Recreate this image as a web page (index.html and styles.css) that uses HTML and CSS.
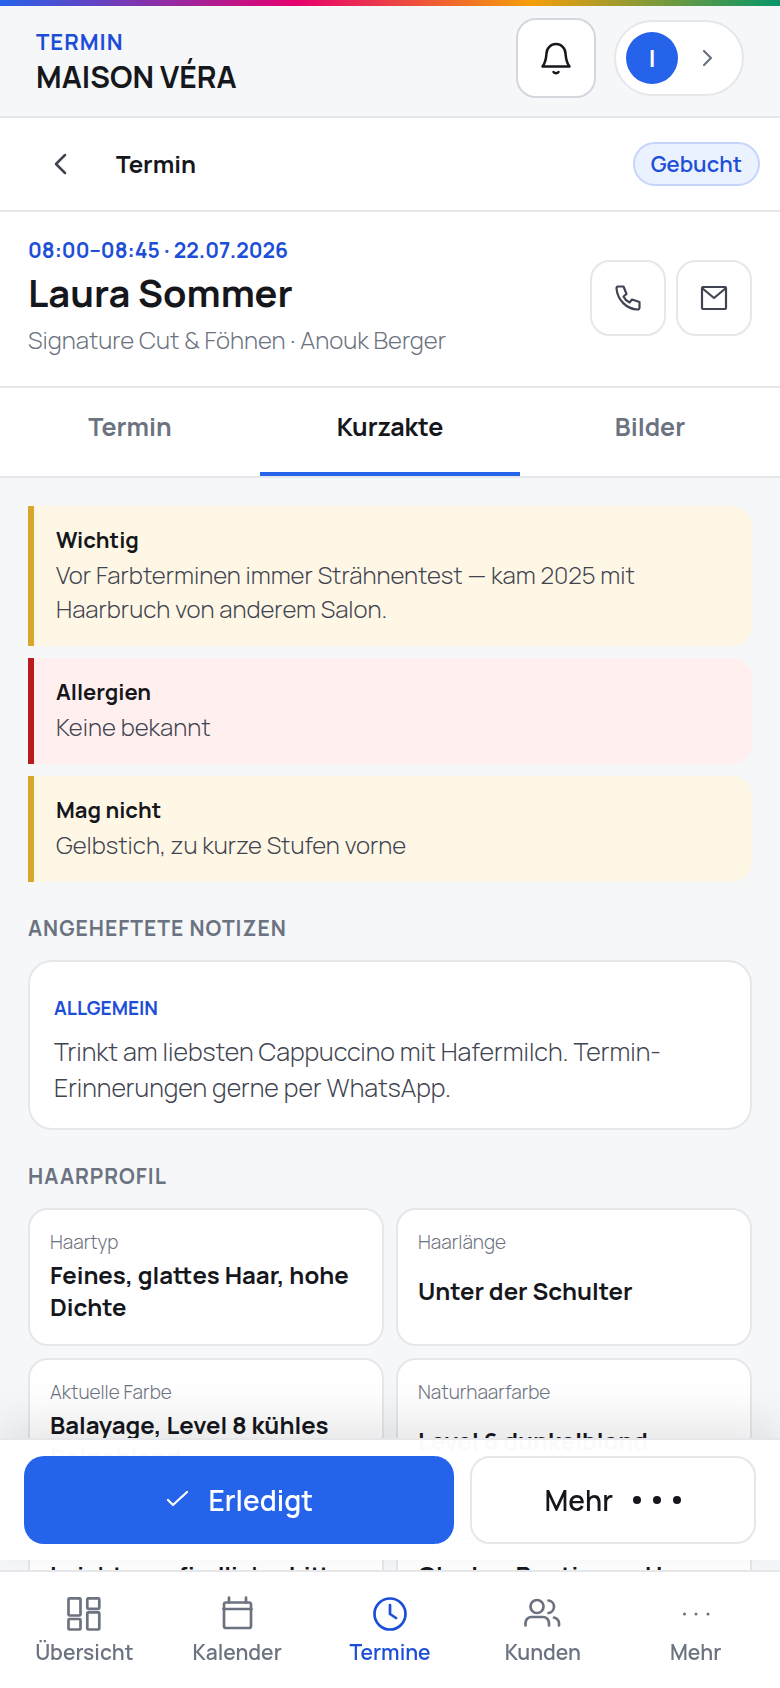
FILE: index.html
```
<!DOCTYPE html>
<html lang="de">

<head>
    <meta charset="UTF-8">
    <meta name="viewport" content="width=device-width, initial-scale=1.0">
    <title>MAISON VÉRA - Termin</title>
    <link rel="stylesheet" href="styles.css">
</head>

<body>
    <div class="app">
        <header class="topbar">
            <div class="brand">
                <span class="brand-label">TERMIN</span>
                <span class="brand-name">MAISON VÉRA</span>
            </div>
            <button type="button" class="bell-btn" aria-label="Benachrichtigungen">
                <svg width="36" height="36" viewBox="0 0 36 36" fill="none" stroke="currentColor" stroke-width="2.5" stroke-linecap="round" stroke-linejoin="round">
                    <path d="M4.500 26.500h27c-3.500-4.500-3.500-8-4-13a9.500 9.500 0 0 0-19 0c-.5 5-.5 8.500-4 13z" />
                    <path d="M15.500 32c1.200 1.600 3.800 1.600 5 0" />
                </svg>
            </button>
            <button type="button" class="profile-btn" aria-label="Profil">
                <span class="avatar">I</span>
                <svg width="12" height="18" viewBox="0 0 12 18" fill="none" stroke="currentColor" stroke-width="2.2" stroke-linecap="round" stroke-linejoin="round">
                    <path d="M2 2l7 7-7 7" />
                </svg>
            </button>
        </header>

        <div class="subbar">
            <button type="button" class="back-btn" aria-label="Zurück">
                <svg width="14" height="22" viewBox="0 0 14 22" fill="none" stroke="currentColor" stroke-width="2.5" stroke-linecap="round" stroke-linejoin="round">
                    <path d="M12 2l-9 9 9 9" />
                </svg>
            </button>
            <h1>Termin</h1>
            <span class="status">Gebucht</span>
        </div>

        <section class="client">
            <div class="client-info">
                <p class="client-time">08:00–08:45 · 22.07.2026</p>
                <h2>Laura Sommer</h2>
                <p class="client-service">Signature Cut &amp; Föhnen · Anouk Berger</p>
            </div>
            <div class="contact">
                <a href="#" aria-label="Anrufen">
                    <svg width="28" height="28" viewBox="0 0 28 28" fill="none" stroke="currentColor" stroke-width="2.2" stroke-linejoin="round">
                        <path d="M4 2.500h5.500l3 7.500-3 2.500c1.300 2.800 3.200 4.700 6 6l2.500-3 7.500 2.500V23.500c0 1-.8 2-2 2C12.500 25 3.500 16 2.500 4.500c0-1.200.7-2 1.500-2z" />
                    </svg>
                </a>
                <a href="#" aria-label="E-Mail">
                    <svg width="28" height="28" viewBox="0 0 28 28" fill="none" stroke="currentColor" stroke-width="2.2" stroke-linejoin="round">
                        <rect x="2" y="3" width="24" height="22" rx="1" />
                        <path d="M2 4l12 10L26 4" />
                    </svg>
                </a>
            </div>
        </section>

        <div class="tabs" role="tablist">
            <button type="button" role="tab">Termin</button>
            <button type="button" role="tab" class="active" aria-selected="true">Kurzakte</button>
            <button type="button" role="tab">Bilder</button>
        </div>

        <main>
            <div class="alerts">
                <div class="alert">
                    <strong>Wichtig</strong>
                    <p>Vor Farbterminen immer Strähnentest — kam 2025 mit Haarbruch von anderem Salon.</p>
                </div>
                <div class="alert danger">
                    <strong>Allergien</strong>
                    <p>Keine bekannt</p>
                </div>
                <div class="alert">
                    <strong>Mag nicht</strong>
                    <p>Gelbstich, zu kurze Stufen vorne</p>
                </div>
            </div>

            <h3>ANGEHEFTETE NOTIZEN</h3>
            <article class="note">
                <span class="note-tag">ALLGEMEIN</span>
                <p>Trinkt am liebsten Cappuccino mit Hafermilch. Termin-Erinnerungen gerne per WhatsApp.</p>
            </article>

            <h3>HAARPROFIL</h3>
            <dl class="profile">
                <div>
                    <dt>Haartyp</dt>
                    <dd>Feines, glattes Haar, hohe Dichte</dd>
                </div>
                <div>
                    <dt>Haarlänge</dt>
                    <dd>Unter der Schulter</dd>
                </div>
                <div>
                    <dt>Aktuelle Farbe</dt>
                    <dd>Balayage, Level 8 kühles Beigeblond</dd>
                </div>
                <div>
                    <dt>Naturhaarfarbe</dt>
                    <dd>Level 6 dunkelblond</dd>
                </div>
                <div>
                    <dt>Kopfhaut</dt>
                    <dd>Leicht empfindlich – bitte mild</dd>
                </div>
                <div>
                    <dt>Pflegelevel</dt>
                    <dd>Olaplex-Routine zu Hause empfohlen</dd>
                </div>
            </dl>
        </main>

        <footer class="dock">
            <div class="actions">
                <button type="button" class="done-btn">
                    <svg width="24" height="20" viewBox="0 0 24 20" fill="none" stroke="currentColor" stroke-width="2.2" stroke-linecap="round" stroke-linejoin="round">
                        <path d="M3 10l5 5L22 2" />
                    </svg>
                    Erledigt
                </button>
                <button type="button" class="more-btn">
                    Mehr
                    <svg width="48" height="10" viewBox="0 0 48 10" fill="currentColor">
                        <circle cx="4" cy="5" r="4" />
                        <circle cx="24" cy="5" r="4" />
                        <circle cx="44" cy="5" r="4" />
                    </svg>
                </button>
            </div>
            <nav>
                <a href="#">
                    <svg width="40" height="40" viewBox="0 0 40 40" fill="none" stroke="currentColor" stroke-width="2.7" stroke-linejoin="round">
                        <rect x="4.500" y="4.300" width="12" height="17.200" rx="1" />
                        <rect x="4.500" y="25" width="12" height="10.500" rx="1" />
                        <rect x="23.300" y="4.300" width="12" height="10.500" rx="1" />
                        <rect x="23.300" y="18.300" width="12" height="17.200" rx="1" />
                    </svg>
                    Übersicht
                </a>
                <a href="#">
                    <svg width="40" height="40" viewBox="0 0 40 40" fill="none" stroke="currentColor" stroke-width="2.7" stroke-linecap="round" stroke-linejoin="round">
                        <rect x="7" y="8.500" width="27" height="25.500" rx="2" />
                        <path d="M6.500 15h28M12 3.500v5M29 3.500v5" />
                    </svg>
                    Kalender
                </a>
                <a href="#" class="active">
                    <svg width="40" height="40" viewBox="0 0 40 40" fill="none" stroke="currentColor" stroke-width="2.7" stroke-linecap="round" stroke-linejoin="round">
                        <circle cx="20" cy="20" r="15.500" />
                        <path d="M20 11v9l6 4" />
                    </svg>
                    Termine
                </a>
                <a href="#">
                    <svg width="40" height="40" viewBox="0 0 40 40" fill="none" stroke="currentColor" stroke-width="2.7" stroke-linecap="round" stroke-linejoin="round">
                        <circle cx="14" cy="12.500" r="6.500" />
                        <path d="M2.500 31.500v-2.500a6 6 0 0 1 6-6h11.500a6 6 0 0 1 6 6v2.500M25.500 6.500a6.300 6.300 0 0 1 0 12.500M31 23.500a6.500 6.500 0 0 1 5 6v2" />
                    </svg>
                    Kunden
                </a>
                <a href="#">
                    <svg width="40" height="40" viewBox="0 0 40 40" fill="currentColor">
                        <circle cx="8.500" cy="20" r="1.500" />
                        <circle cx="20" cy="20" r="1.500" />
                        <circle cx="32" cy="20" r="1.500" />
                    </svg>
                    Mehr
                </a>
            </nav>
        </footer>
    </div>
</body>

</html>
```
FILE: styles.css
```
* {
    box-sizing: border-box;
}

body {
    font-family: Manrope, Inter, sans-serif;
    margin: 0;
    background-color: #f5f7f9;
    color: #15171c;
}

h1,
h2,
h3,
p,
dl,
dd {
    margin: 0;
}

button {
    font-family: inherit;
    color: inherit;
    cursor: pointer;
}

a {
    text-decoration: none;
}

.app {
    display: flex;
    flex-direction: column;
    height: 100vh;
    overflow: hidden;
}

/* Header */
.topbar {
    display: flex;
    flex-shrink: 0;
    align-items: center;
    padding: 12px 36px 18px;
    border-top: 6px solid;
    border-image: linear-gradient(90deg, #2563eb, #e6006e 38%, #f59e0b 68%, #059669) 1;
    border-bottom: 0;
}

.brand {
    display: flex;
    flex: 1;
    flex-direction: column;
    padding-top: 6px;
}

.brand-label {
    font-size: 22px;
    line-height: 32px;
    font-weight: 700;
    letter-spacing: 1px;
    color: #1d4ed8;
}

.brand-name {
    font-size: 30px;
    line-height: 38px;
    font-weight: 700;
}

.bell-btn {
    display: grid;
    place-items: center;
    width: 80px;
    height: 80px;
    padding: 0;
    background-color: #fff;
    border: 2px solid #d4d7dd;
    border-radius: 20px;
}

.profile-btn {
    display: flex;
    align-items: center;
    gap: 24px;
    height: 76px;
    margin-left: 18px;
    padding: 0 28px 0 10px;
    background-color: #fff;
    border: 2px solid #e5e7eb;
    border-radius: 38px;
    color: #6b7280;
}

.avatar {
    width: 52px;
    line-height: 52px;
    background-color: #2563eb;
    border-radius: 50%;
    color: #fff;
    font-size: 24px;
    font-weight: 700;
}

.subbar {
    display: flex;
    flex-shrink: 0;
    align-items: center;
    height: 96px;
    padding: 0 20px 0 16px;
    background-color: #fff;
    border: solid #e5e7eb;
    border-width: 2px 0;
}

.back-btn {
    display: grid;
    place-items: center;
    width: 88px;
    height: 88px;
    padding: 0;
    background: none;
    border: none;
    color: #3f4450;
}

.subbar h1 {
    flex: 1;
    padding: 0 0 2px 12px;
    font-size: 24px;
    font-weight: 700;
}

.status {
    padding: 0 16px;
    font-size: 22px;
    line-height: 40px;
    font-weight: 600;
    color: #1d4ed8;
    background-color: #eaf1ff;
    border: 2px solid #c5d5f9;
    border-radius: 22px;
}

/* Client */
.client {
    display: flex;
    flex-shrink: 0;
    align-items: center;
    padding: 24px 28px 26px;
    background-color: #fff;
    border-bottom: 2px solid #e5e7eb;
}

.client-info {
    flex: 1;
}

.client-time {
    font-size: 21px;
    line-height: 28px;
    font-weight: 700;
    color: #1d4ed8;
}

.client h2 {
    font-size: 38px;
    line-height: 56px;
    font-weight: 700;
}

.client-service {
    font-size: 24px;
    line-height: 40px;
    font-weight: 300;
    color: #6b7280;
}

.contact {
    display: flex;
    gap: 10px;
}

.contact a {
    display: grid;
    place-items: center;
    width: 76px;
    height: 76px;
    border: 2px solid #e5e7eb;
    border-radius: 20px;
    color: #3f4450;
}

.tabs {
    display: grid;
    flex-shrink: 0;
    grid-template-columns: repeat(3, 1fr);
    background-color: #fff;
    border-bottom: 2px solid #e5e7eb;
}

.tabs button {
    height: 88px;
    padding: 0 0 8px;
    background: none;
    border: none;
    border-bottom: 4px solid transparent;
    color: #6b7280;
    font-size: 25px;
    font-weight: 700;
}

.tabs .active {
    border-bottom-color: #2563eb;
    color: #15171c;
}

/* Content */
main {
    flex: 1;
    min-height: 0;
    overflow: hidden;
    padding: 28px;
}

.alerts {
    display: grid;
    gap: 12px;
}

.alert {
    padding: 16px 22px 20px;
    background-color: #fff7e6;
    border-left: 6px solid #d8a62a;
    border-radius: 0 20px 20px 0;
}

.alert.danger {
    background-color: #fff0ef;
    border-left-color: #b81c1c;
}

.alert strong {
    display: block;
    font-size: 22px;
    line-height: 36px;
    font-weight: 700;
}

.alert p {
    font-size: 24px;
    line-height: 34px;
    font-weight: 300;
    color: #3f4450;
}

h3 {
    padding: 30px 0 16px;
    font-size: 21px;
    line-height: 32px;
    font-weight: 700;
    letter-spacing: 1px;
    color: #6b7280;
}

.note {
    padding: 30px 24px 22px;
    background-color: #fff;
    border: 2px solid #e5e7eb;
    border-radius: 24px;
}

.note-tag {
    display: block;
    margin-bottom: 10px;
    font-size: 19px;
    line-height: 32px;
    font-weight: 700;
    color: #1d4ed8;
}

.note p {
    font-size: 25px;
    line-height: 36px;
    font-weight: 300;
    color: #3f4450;
}

.profile {
    display: grid;
    grid-template-columns: 1fr 1fr;
    gap: 12px;
}

.profile div {
    display: flex;
    flex-direction: column;
    min-height: 138px;
    padding: 18px 20px;
    background-color: #fff;
    border: 2px solid #e5e7eb;
    border-radius: 20px;
}

.profile dt {
    font-size: 19px;
    line-height: 28px;
    font-weight: 300;
    color: #6b7280;
}

.profile dd {
    margin: auto 0;
    font-size: 24px;
    line-height: 32px;
    font-weight: 700;
}

/* Fixed footer */
.dock {
    position: fixed;
    right: 0;
    bottom: 0;
    left: 0;
}

.actions {
    display: grid;
    grid-template-columns: 3fr 2fr;
    gap: 16px;
    margin-bottom: 10px;
    padding: 16px 24px;
    background-color: rgba(255, 255, 255, 0.98);
    border-top: 2px solid #e5e7eb;
    box-shadow: 0 -16px 48px rgba(0, 0, 0, 0.1);
}

.actions button {
    display: flex;
    align-items: center;
    justify-content: center;
    gap: 20px;
    height: 88px;
    border-radius: 20px;
    font-size: 28px;
    font-weight: 600;
}

.done-btn {
    background-color: #2563eb;
    border: none;
    color: #fff;
}

.more-btn {
    background-color: #fff;
    border: 2px solid #e5e7eb;
}

nav {
    display: grid;
    grid-template-columns: repeat(5, 1fr);
    height: 118px;
    padding: 22px 8px 0;
    background-color: #fff;
    border-top: 2px solid #e5e7eb;
}

nav a {
    display: flex;
    flex-direction: column;
    align-items: center;
    font-size: 21px;
    line-height: 36px;
    font-weight: 600;
    color: #6b7280;
}

nav .active {
    color: #1d4ed8;
}
```
